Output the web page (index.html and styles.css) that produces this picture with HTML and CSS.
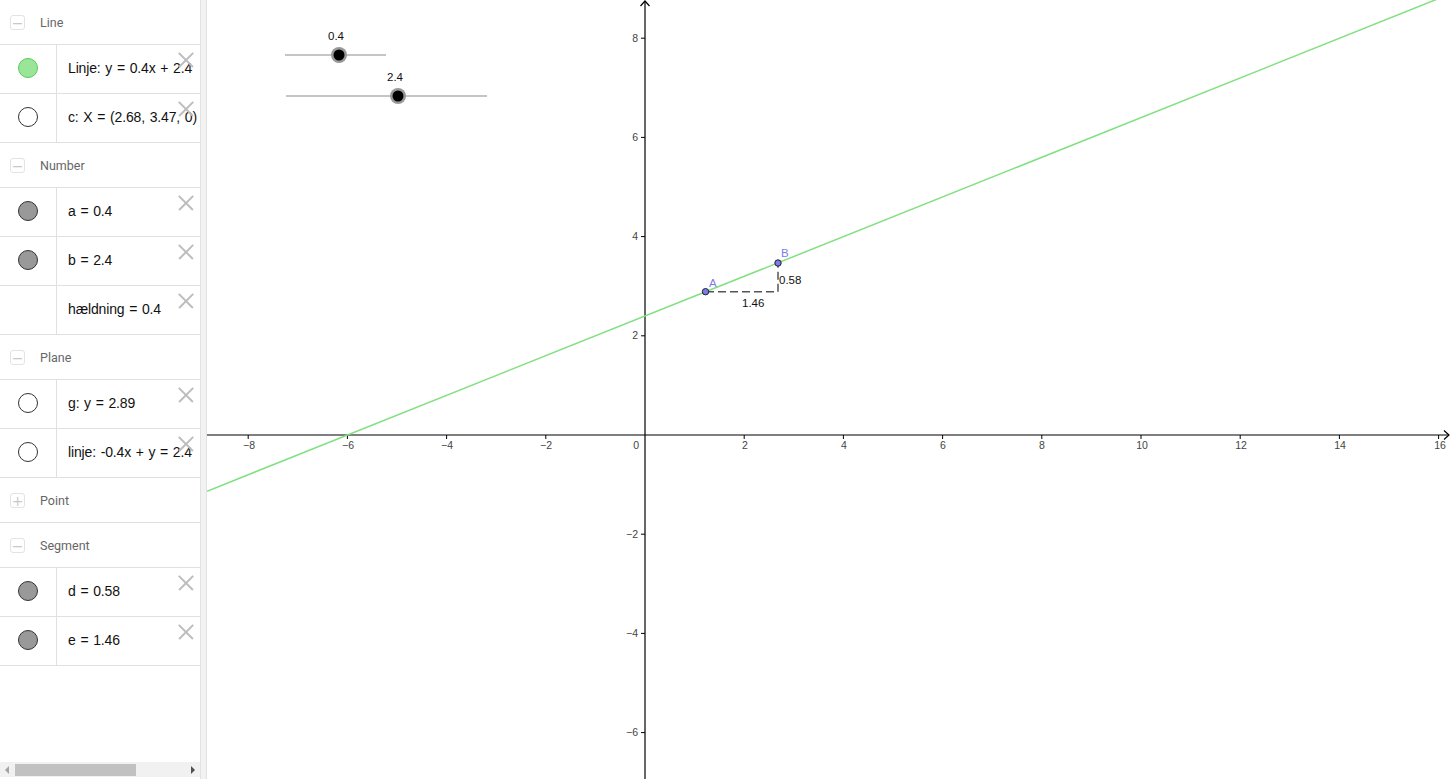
FILE: index.html
```html
<!DOCTYPE html>
<html>
<head>
<meta charset="utf-8">
<link rel="stylesheet" href="styles.css">
</head>
<body>
<div class="app">
  <aside class="algebra">
    <div class="list">
      <div class="group"><span class="toggle">&minus;</span><span class="gname">Line</span></div>
      <div class="item"><div class="ic"><span class="dot green"></span></div><div class="tx">Linje: y = 0.4x + 2.4</div><span class="del"></span></div>
      <div class="item"><div class="ic"><span class="dot white"></span></div><div class="tx">c: X = (2.68, 3.47, 0)</div><span class="del"></span></div>
      <div class="group"><span class="toggle">&minus;</span><span class="gname">Number</span></div>
      <div class="item"><div class="ic"><span class="dot gray"></span></div><div class="tx">a = 0.4</div><span class="del"></span></div>
      <div class="item"><div class="ic"><span class="dot gray"></span></div><div class="tx">b = 2.4</div><span class="del"></span></div>
      <div class="item"><div class="ic"></div><div class="tx">hældning = 0.4</div><span class="del"></span></div>
      <div class="group"><span class="toggle">&minus;</span><span class="gname">Plane</span></div>
      <div class="item"><div class="ic"><span class="dot white"></span></div><div class="tx">g: y = 2.89</div><span class="del"></span></div>
      <div class="item"><div class="ic"><span class="dot white"></span></div><div class="tx">linje: -0.4x + y = 2.4</div><span class="del"></span></div>
      <div class="group"><span class="toggle">+</span><span class="gname">Point</span></div>
      <div class="group"><span class="toggle">&minus;</span><span class="gname">Segment</span></div>
      <div class="item"><div class="ic"><span class="dot gray"></span></div><div class="tx">d = 0.58</div><span class="del"></span></div>
      <div class="item"><div class="ic"><span class="dot gray"></span></div><div class="tx">e = 1.46</div><span class="del"></span></div>
    </div>
    <div class="hscroll">
      <span class="arr left"></span>
      <div class="track"><span class="thumb"></span></div>
      <span class="arr right"></span>
    </div>
  </aside>
  <div class="splitter"></div>
  <main class="graphics">
    <svg class="canvas" viewBox="207 0 1249 779" width="1249" height="779" xmlns="http://www.w3.org/2000/svg">
      <g stroke="#000" stroke-width="1.2" fill="none">
        <line x1="207" y1="435" x2="1449" y2="435"/>
        <polyline points="1444,430.5 1449,435 1444,439.5"/>
        <line x1="645" y1="1" x2="645" y2="779"/>
        <polyline points="640.5,6 645,1 649.5,6"/>
      </g>
      <g stroke="#000" stroke-width="1">
        <line x1="248.2" y1="435" x2="248.2" y2="439"/>
        <line x1="347.4" y1="435" x2="347.4" y2="439"/>
        <line x1="446.6" y1="435" x2="446.6" y2="439"/>
        <line x1="545.8" y1="435" x2="545.8" y2="439"/>
        <line x1="744.2" y1="435" x2="744.2" y2="439"/>
        <line x1="843.4" y1="435" x2="843.4" y2="439"/>
        <line x1="942.6" y1="435" x2="942.6" y2="439"/>
        <line x1="1041.8" y1="435" x2="1041.8" y2="439"/>
        <line x1="1141" y1="435" x2="1141" y2="439"/>
        <line x1="1240.2" y1="435" x2="1240.2" y2="439"/>
        <line x1="1339.4" y1="435" x2="1339.4" y2="439"/>
        <line x1="1438.6" y1="435" x2="1438.6" y2="439"/>
        <line x1="641" y1="38.2" x2="645" y2="38.2"/>
        <line x1="641" y1="137.4" x2="645" y2="137.4"/>
        <line x1="641" y1="236.6" x2="645" y2="236.6"/>
        <line x1="641" y1="335.8" x2="645" y2="335.8"/>
        <line x1="641" y1="534.2" x2="645" y2="534.2"/>
        <line x1="641" y1="633.4" x2="645" y2="633.4"/>
        <line x1="641" y1="732.6" x2="645" y2="732.6"/>
      </g>
      <g class="axlbl" text-anchor="middle">
        <text x="249" y="449">−8</text>
        <text x="348" y="449">−6</text>
        <text x="447" y="449">−4</text>
        <text x="546" y="449">−2</text>
        <text x="745" y="449">2</text>
        <text x="844" y="449">4</text>
        <text x="943" y="449">6</text>
        <text x="1042" y="449">8</text>
        <text x="1142" y="449">10</text>
        <text x="1241" y="449">12</text>
        <text x="1340" y="449">14</text>
        <text x="1440" y="449">16</text>
      </g>
      <g class="axlbl" text-anchor="end">
        <text x="639" y="449">0</text>
        <text x="638" y="42">8</text>
        <text x="638" y="141">6</text>
        <text x="638" y="240">4</text>
        <text x="638" y="339">2</text>
        <text x="638" y="538">−2</text>
        <text x="638" y="637">−4</text>
        <text x="638" y="736">−6</text>
      </g>
      <line x1="207" y1="491.2" x2="1456" y2="-8.4" stroke="#80e080" stroke-width="1.5"/>
      <g stroke="#555" stroke-width="1.5" stroke-dasharray="8 4" fill="none">
        <line x1="706" y1="291.7" x2="778" y2="291.7"/>
        <line x1="778" y1="291.7" x2="778" y2="263"/>
      </g>
      <g class="seglbl">
        <text x="742" y="307">1.46</text>
        <text x="779" y="284">0.58</text>
      </g>
      <g fill="#7b7bf0" stroke="#222" stroke-width="1">
        <circle cx="705.5" cy="291.7" r="3.2"/>
        <circle cx="778" cy="263" r="3.2"/>
      </g>
      <g class="ptlbl">
        <text x="709" y="287">A</text>
        <text x="781" y="257">B</text>
      </g>
      <g>
        <line x1="285" y1="55" x2="386" y2="55" stroke="#8c8c8c" stroke-width="1.2"/>
        <circle cx="339" cy="55" r="8" fill="#999"/>
        <circle cx="339" cy="55" r="5.5" fill="#000"/>
        <text class="sllbl" x="336" y="40" text-anchor="middle">0.4</text>
        <line x1="286" y1="96" x2="487" y2="96" stroke="#8c8c8c" stroke-width="1.2"/>
        <circle cx="398" cy="96" r="8" fill="#999"/>
        <circle cx="398" cy="96" r="5.5" fill="#000"/>
        <text class="sllbl" x="395" y="81" text-anchor="middle">2.4</text>
      </g>
    </svg>
  </main>
</div>
</body>
</html>
```
FILE: styles.css
```css
* { box-sizing: border-box; }
html, body { margin: 0; padding: 0; width: 1456px; height: 779px; overflow: hidden; background: #fff; }
.app { display: flex; width: 1456px; height: 779px; }
.algebra { width: 200px; flex: none; display: flex; flex-direction: column; position: relative; background: #fff; }
.list { flex: 1; }
.group { height: 45px; border-bottom: 1px solid #e0e0e0; display: flex; align-items: center; padding-left: 10px; padding-top: 1px; }
.toggle { width: 15px; height: 15px; border: 1px solid #e3e3e3; border-radius: 3px; display: flex; align-items: center; justify-content: center; color: #c8c8c8; font: 14px/1 "DejaVu Sans", sans-serif; }
.gname { margin-left: 15px; font: 12.5px "Roboto", "Liberation Sans", sans-serif; color: #666; }
.item { height: 49px; border-bottom: 1px solid #e0e0e0; display: flex; position: relative; }
.ic { width: 57px; flex: none; border-right: 1px solid #e0e0e0; display: flex; align-items: center; justify-content: center; padding-bottom: 2px; }
.dot { width: 20px; height: 20px; border-radius: 50%; border: 1.3px solid #333; display: block; }
.dot.green { background: #99e699; border-color: #55cc55; }
.dot.white { background: #fff; }
.dot.gray { background: #999; }
.tx { flex: 1; display: flex; align-items: center; padding-left: 11px; padding-bottom: 3px; white-space: nowrap; overflow: hidden; font: 14px "Liberation Sans", sans-serif; color: #111; letter-spacing: -0.15px; word-spacing: 1px; }
.del { position: absolute; right: 6px; top: 7px; width: 16px; height: 16px; }
.del::before, .del::after { content: ""; position: absolute; left: -2px; top: 7px; width: 20px; height: 1.5px; background: #bdbdbd; }
.del::before { transform: rotate(45deg); }
.del::after { transform: rotate(-45deg); }
.hscroll { height: 15px; margin-bottom: 2px; display: flex; align-items: center; background: #f1f1f1; }
.arr { width: 15px; height: 15px; flex: none; position: relative; }
.arr.left::before { content: ""; position: absolute; left: 5px; top: 4px; border-right: 4px solid #a3a3a3; border-top: 4px solid transparent; border-bottom: 4px solid transparent; }
.arr.right::before { content: ""; position: absolute; left: 6px; top: 4px; border-left: 4px solid #505050; border-top: 4px solid transparent; border-bottom: 4px solid transparent; }
.track { flex: 1; height: 15px; display: flex; align-items: center; }
.thumb { display: block; width: 121px; height: 12px; background: #c1c1c1; }
.splitter { width: 7px; flex: none; background: #f2f2f2; border-left: 1px solid #e2e2e2; border-right: 1px solid #e2e2e2; }
.graphics { flex: 1; position: relative; overflow: hidden; }
.canvas { display: block; }
.axlbl { font: 10.5px "Liberation Sans", sans-serif; fill: #444; }
.seglbl { font: 11.5px "Liberation Sans", sans-serif; fill: #111; }
.ptlbl { font: 11.5px "Liberation Sans", sans-serif; fill: #7b7bf0; }
.sllbl { font: 11.5px "Liberation Sans", sans-serif; fill: #111; }
```
